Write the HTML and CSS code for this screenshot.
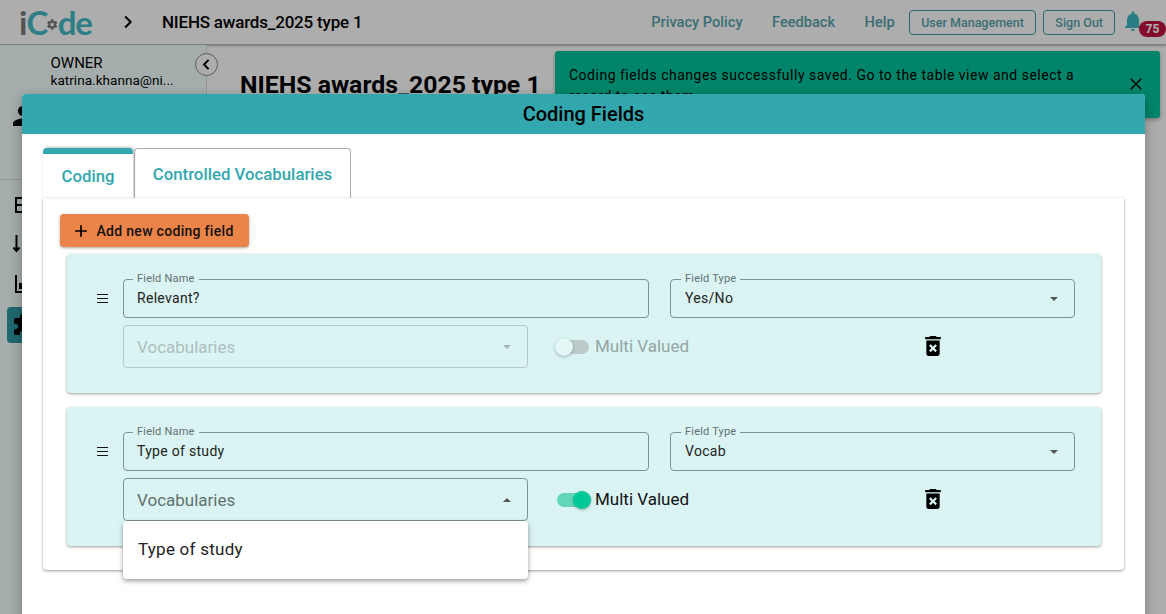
FILE: index.html
```html
<!DOCTYPE html>
<html lang="en">
<head>
    <meta charset="UTF-8">
    <title>iCode — Coding Fields</title>
    <link rel="stylesheet" href="styles.css">
</head>
<body>
    <header class="topbar">
        <div class="logo">
            <span class="logo-i">i</span>C<svg class="logo-gear" viewBox="0 0 24 24"><path d="M19.4 13c.04-.33.06-.66.06-1s-.02-.67-.06-1l2.1-1.65c.19-.15.24-.42.12-.64l-2-3.46c-.12-.22-.38-.3-.61-.22l-2.49 1c-.52-.4-1.08-.73-1.69-.98l-.38-2.65C14.4 2.18 14.2 2 13.96 2h-4c-.25 0-.46.18-.49.42l-.38 2.65c-.61.25-1.17.59-1.69.98l-2.49-1c-.23-.09-.49 0-.61.22l-2 3.46c-.13.22-.07.49.12.64L4.52 11c-.04.33-.07.67-.07 1s.03.67.07 1l-2.1 1.65c-.19.15-.25.42-.12.64l2 3.46c.12.22.38.3.61.22l2.49-1c.52.4 1.08.73 1.69.98l.38 2.65c.03.24.24.42.49.42h4c.24 0 .45-.18.49-.42l.38-2.65c.61-.25 1.17-.59 1.69-.98l2.49 1c.23.09.49 0 .61-.22l2-3.46c.12-.22.07-.49-.12-.64L19.4 13zM12 15.5c-1.93 0-3.5-1.57-3.5-3.5s1.57-3.5 3.5-3.5 3.5 1.57 3.5 3.5-1.57 3.5-3.5 3.5z"/></svg>de
        </div>
        <svg class="crumb-arrow" viewBox="0 0 24 24"><path d="M8.6 5.4 15.2 12l-6.600 6.600" fill="none" stroke="#000" stroke-width="2.400"/></svg>
        <div class="crumb-title">NIEHS awards_2025 type 1</div>
        <nav class="top-links">
            <a href="#">Privacy Policy</a>
            <a href="#">Feedback</a>
            <a href="#">Help</a>
        </nav>
        <button class="top-btn user-btn">User Management</button>
        <button class="top-btn">Sign Out</button>
        <div class="bell">
            <svg viewBox="0 0 24 24"><path d="M12 22c1.100 0 2-.9 2-2h-4c0 1.100.89 2 2 2zm6-6v-5c0-3.070-1.640-5.640-4.500-6.320V4c0-.83-.67-1.500-1.500-1.500s-1.500.67-1.500 1.500v.68C7.630 5.360 6 7.920 6 11v5l-2 2v1h16v-1l-2-2z"/></svg>
            <span class="badge">75</span>
        </div>
    </header>

    <div class="page">
        <aside class="sidebar">
            <div class="owner">
                <div>OWNER</div>
                <div>katrina.khanna@ni...</div>
            </div>
            <svg class="person" viewBox="0 0 24 24"><path d="M12 12c2.210 0 4-1.790 4-4s-1.790-4-4-4-4 1.790-4 4 1.790 4 4 4zm0 2c-2.670 0-8 1.340-8 4v2h16v-2c0-2.660-5.330-4-8-4z"/></svg>
            <ul class="side-menu">
                <li><svg viewBox="0 0 24 24"><path d="M3 4h18v16H3zm2 2v5h14V6zm0 7v5h14v-5z"/></svg></li>
                <li><svg viewBox="0 0 24 24"><path d="M4.500 2v16M1.500 14.500l3 3.500 3-3.500" fill="none" stroke="#000" stroke-width="2"/></svg></li>
                <li><svg viewBox="0 0 24 24"><path d="M3 2h2v16h16v2H3zM7 10h3v6H7zm5-4h3v10h-3z"/></svg></li>
                <li class="active"><svg viewBox="0 0 24 24"><path d="M20.500 11H19V7c0-1.100-.9-2-2-2h-4V3.500C13 2.120 11.880 1 10.500 1S8 2.120 8 3.500V5H4c-1.100 0-1.990.9-1.990 2v3.800H3.500c1.490 0 2.700 1.210 2.700 2.700s-1.210 2.700-2.700 2.700H2V20c0 1.100.9 2 2 2h3.800v-1.500c0-1.490 1.210-2.700 2.700-2.700 1.490 0 2.700 1.210 2.700 2.700V22H17c1.100 0 2-.9 2-2v-4h1.500c1.380 0 2.500-1.120 2.500-2.500S21.880 11 20.500 11z"/></svg></li>
            </ul>
            <button class="collapse-btn"><svg viewBox="0 0 24 24"><path d="M15 5.500 8.500 12l6.500 6.500" fill="none" stroke="#000" stroke-width="2.800"/></svg></button>
        </aside>
        <main class="main">
            <h1>NIEHS awards_2025 type 1</h1>
        </main>
    </div>

    <div class="toast">
        <p>Coding fields changes successfully saved. Go to the table view and select a record to see them</p>
        <svg class="toast-close" viewBox="0 0 24 24"><path d="M5 5l14 14M19 5 5 19" fill="none" stroke="#000" stroke-width="2"/></svg>
    </div>

    <div class="overlay"></div>

    <section class="modal">
        <h2 class="modal-title">Coding Fields</h2>
        <div class="modal-body">
            <div class="tabs">
                <div class="tab tab-active">Coding</div>
                <div class="tab">Controlled Vocabularies</div>
            </div>
            <div class="panel">
                <button class="add-btn">
                    <svg viewBox="0 0 24 24"><path d="M19 13h-6v6h-2v-6H5v-2h6V5h2v6h6v2z"/></svg>
                    Add new coding field
                </button>

                <div class="card">
                    <div class="row-top">
                        <svg class="handle" viewBox="0 0 12 12"><path d="M0 1.500h11M0 5.500h11M0 9.500h11" stroke="#111" stroke-width="1.100"/></svg>
                        <div class="field name-field">
                            <span class="field-label">Field Name</span>
                            Relevant?
                        </div>
                        <div class="field type-field">
                            <span class="field-label">Field Type</span>
                            Yes/No
                            <span class="caret"></span>
                        </div>
                    </div>
                    <div class="row-bottom">
                        <div class="field select-field disabled">
                            Vocabularies
                            <span class="caret"></span>
                        </div>
                        <div class="switch-wrap disabled">
                            <span class="switch"><span class="thumb"></span></span>
                            <span class="switch-label">Multi Valued</span>
                        </div>
                        <svg class="trash" viewBox="5 3 14 18"><path d="M6 19c0 1.100.9 2 2 2h8c1.100 0 2-.9 2-2V7H6v12zm2.460-7.120l1.410-1.410L12 12.590l2.120-2.120 1.410 1.410L13.410 14l2.120 2.120-1.410 1.410L12 15.410l-2.120 2.120-1.410-1.410L10.590 14l-2.130-2.120zM15.500 4l-1-1h-5l-1 1H5v2h14V4z"/></svg>
                    </div>
                </div>

                <div class="card">
                    <div class="row-top">
                        <svg class="handle" viewBox="0 0 12 12"><path d="M0 1.500h11M0 5.500h11M0 9.500h11" stroke="#111" stroke-width="1.100"/></svg>
                        <div class="field name-field">
                            <span class="field-label">Field Name</span>
                            Type of study
                        </div>
                        <div class="field type-field">
                            <span class="field-label">Field Type</span>
                            Vocab
                            <span class="caret"></span>
                        </div>
                    </div>
                    <div class="row-bottom">
                        <div class="field select-field open">
                            Vocabularies
                            <span class="caret caret-up"></span>
                            <div class="dropdown">Type of study</div>
                        </div>
                        <div class="switch-wrap on">
                            <span class="switch"><span class="thumb"></span></span>
                            <span class="switch-label">Multi Valued</span>
                        </div>
                        <svg class="trash" viewBox="5 3 14 18"><path d="M6 19c0 1.100.9 2 2 2h8c1.100 0 2-.9 2-2V7H6v12zm2.460-7.120l1.410-1.410L12 12.590l2.120-2.120 1.410 1.410L13.410 14l2.120 2.120-1.410 1.410L12 15.410l-2.120 2.120-1.410-1.410L10.590 14l-2.130-2.120zM15.500 4l-1-1h-5l-1 1H5v2h14V4z"/></svg>
                    </div>
                </div>
            </div>
        </div>
    </section>
</body>
</html>
```

FILE: styles.css
```css
* {
    box-sizing: border-box;
}
html, body {
    height: 614px;
}
body {
    margin: 0;
    overflow: hidden;
    position: relative;
    font-family: Roboto, "Liberation Sans", sans-serif;
    background-color: #fff;
    color: #000;
}

/* top bar */
.topbar {
    display: flex;
    align-items: center;
    height: 45px;
    padding-left: 19px;
    border-bottom: 1px solid #bbb;
    background-color: #fff;
    box-shadow: 0 1px 2px rgba(0, 0, 0, .3);
}
.logo {
    display: flex;
    align-items: center;
    width: 73px;
    font-family: Lato, sans-serif;
    font-size: 33px;
    font-weight: 700;
    line-height: 44px;
    letter-spacing: -1px;
    color: #45bbc5;
}
.logo-i {
    color: #7d7d7d;
}
.logo-gear {
    width: 17px;
    height: 17px;
    margin: 5px -1px 0 -1px;
    fill: #7d7d7d;
}
.crumb-arrow {
    width: 20px;
    height: 20px;
    margin-left: 26px;
}
.crumb-title {
    margin-left: 24px;
    font-size: 17px;
    font-weight: 500;
    letter-spacing: -.2px;
}
.top-links {
    display: flex;
    gap: 29.500px;
    margin-left: auto;
}
.top-links a {
    font-size: 14.600px;
    font-weight: 500;
    color: #57a3aa;
    text-decoration: none;
}
.top-btn {
    height: 25px;
    margin-left: 7px;
    padding: 0 11px;
    border: 1px solid #3b9aa3;
    border-radius: 4px;
    background: none;
    font-family: inherit;
    font-size: 12.500px;
    font-weight: 500;
    color: #57a3aa;
}
.user-btn {
    margin-left: 14px;
    padding: 0 11.500px;
}
.bell {
    position: relative;
    width: 45px;
    height: 45px;
    margin-left: 6px;
}
.bell svg {
    position: absolute;
    left: 0;
    top: 9px;
    width: 24px;
    height: 24px;
    fill: #3eb8c2;
}
.badge {
    position: absolute;
    left: 18px;
    top: 21px;
    width: 27px;
    height: 16px;
    border-radius: 8px;
    background-color: #c21240;
    color: #fff;
    font-size: 12px;
    font-weight: 700;
    line-height: 17px;
    text-align: center;
}

/* page behind the modal */
.page {
    display: flex;
    height: 569px;
}
.sidebar {
    position: relative;
    width: 207px;
    border-right: 1px solid #ddd;
    background-color: #f2fffd;
}
.owner {
    padding: 10px 0 0 50.500px;
    height: 49px;
    font-size: 13.600px;
    line-height: 17px;
}
.owner div:first-child {
    font-size: 15px;
}
.person {
    display: block;
    width: 30px;
    height: 30px;
    margin: 7px 0 0 8px;
}
.side-menu {
    list-style-type: none;
    margin: 48px 0 0;
    padding: 7px 0 0 7px;
    border-top: 1px solid #ddd;
}
.side-menu li {
    display: flex;
    align-items: center;
    height: 36px;
    margin-bottom: 4px;
    padding-left: 5px;
    border-radius: 4px;
}
.side-menu svg {
    width: 24px;
    height: 24px;
}
.side-menu .active {
    background-color: #2f9aa3;
}
.collapse-btn {
    position: absolute;
    left: 195px;
    top: 8px;
    width: 23px;
    height: 23px;
    padding: 2px;
    border: 1px solid #888;
    border-radius: 50%;
    background-color: #fff;
}
.collapse-btn svg {
    display: block;
    width: 17px;
    height: 17px;
}
.main {
    flex: 1;
    padding-left: 33px;
}
.main h1 {
    margin: 25px 0 0;
    font-size: 24.800px;
    font-weight: 700;
}
.toast {
    position: absolute;
    left: 555px;
    top: 51px;
    width: 605px;
    height: 67px;
    padding: 14px 50px 0 14px;
    border-radius: 3px;
    background-color: #00c49c;
    box-shadow: 0 2px 4px rgba(0, 0, 0, .3);
}
.toast p {
    margin: 0;
    font-size: 14px;
    line-height: 21px;
    letter-spacing: .5px;
}
.toast-close {
    position: absolute;
    right: 15px;
    top: 24px;
    width: 18px;
    height: 18px;
}
.overlay {
    position: absolute;
    inset: 0;
    background-color: rgba(0, 0, 0, .32);
}

/* modal */
.modal {
    position: absolute;
    left: 22px;
    top: 94px;
    width: 1123px;
    height: 530px;
    border-radius: 4px 4px 0 0;
    background-color: #fff;
    box-shadow: 0 4px 12px rgba(0, 0, 0, .3);
}
.modal-title {
    height: 40px;
    margin: 0;
    border-radius: 4px 4px 0 0;
    background-color: #33a7ae;
    font-size: 20px;
    font-weight: 500;
    line-height: 41px;
    text-align: center;
}
.modal-body {
    padding: 14px 21px 0;
}
.tabs {
    display: flex;
    gap: 1px;
    height: 50px;
}
.tab {
    width: 217px;
    padding-top: 15px;
    border: 1px solid #aaa;
    border-bottom: none;
    border-radius: 4px 4px 0 0;
    font-size: 16.800px;
    font-weight: 500;
    color: #33a7ae;
    text-align: center;
}
.tab-active {
    width: 90px;
    padding-top: 12px;
    border: none;
    border-top: 6px solid #33a7ae;
    box-shadow: 1px -1px 3px rgba(0, 0, 0, .25);
}
.panel {
    height: 372px;
    padding: 16px 23px 0 24px;
    border-radius: 0 0 4px 4px;
    background-color: #fff;
    box-shadow: 0 1px 3px rgba(0, 0, 0, .4);
}
.add-btn {
    display: flex;
    align-items: center;
    gap: 6px;
    width: 189px;
    height: 33px;
    margin-left: -7px;
    padding: 0 0 0 10.500px;
    border: none;
    border-radius: 4px;
    background-color: #ea8449;
    box-shadow: 0 1px 3px rgba(0, 0, 0, .35);
    font-family: inherit;
    font-size: 14px;
    font-weight: 500;
    letter-spacing: .3px;
    color: #111;
}
.add-btn svg {
    width: 20px;
    height: 20px;
}
.card {
    height: 139px;
    margin-top: 7px;
    margin-bottom: 14px;
    padding: 25px 26px 0 30px;
    border-radius: 4px;
    background-color: #daf4f3;
    box-shadow: 0 1px 3px rgba(0, 0, 0, .4);
}
.row-top {
    display: flex;
    align-items: center;
}
.handle {
    width: 12px;
    height: 12px;
    margin-right: 14px;
}
.field {
    position: relative;
    display: flex;
    align-items: center;
    height: 39px;
    padding: 0 0 2px 13px;
    border: 1px solid #7f9291;
    border-radius: 4px;
    font-size: 14px;
    letter-spacing: .3px;
    color: #222;
}
.name-field {
    width: 526px;
}
.type-field {
    width: 405px;
    margin-left: 21px;
    padding-left: 14px;
}
.field-label {
    position: absolute;
    left: 9px;
    top: -7px;
    padding: 0 4px;
    background-color: #daf4f3;
    font-size: 11px;
    line-height: 12px;
    letter-spacing: .2px;
    color: #5f7170;
}
.type-field .field-label {
    left: 10px;
}
.caret {
    position: absolute;
    right: 16px;
    top: 50%;
    margin-top: -2px;
    border-left: 4.500px solid transparent;
    border-right: 4.500px solid transparent;
    border-top: 4.500px solid #555;
}
.caret-up {
    border-top: none;
    border-bottom: 4.500px solid #555;
}
.row-bottom {
    display: grid;
    grid-template-columns: 405px 397px 16px;
    align-items: center;
    margin-top: 7px;
    margin-left: 26px;
}
.select-field {
    height: 43px;
    padding: 1px 0 0 13px;
    font-size: 17px;
    letter-spacing: 0;
    color: #5f7170;
}
.select-field.disabled {
    border-color: #b5c9c8;
    color: #adbfbe;
}
.select-field.disabled .caret {
    border-top-color: #a5b5b4;
}
.dropdown {
    position: absolute;
    left: -1px;
    top: 42px;
    z-index: 2;
    width: 405px;
    height: 58px;
    padding-left: 15px;
    border-radius: 4px;
    background-color: #fff;
    box-shadow: 0 2px 5px rgba(0, 0, 0, .4);
    font-size: 17px;
    line-height: 57px;
    letter-spacing: .25px;
    color: #222;
}
.switch-wrap {
    display: flex;
    align-items: center;
    margin-left: 29px;
    font-size: 17px;
    color: #111;
}
.switch-label {
    margin-top: -2px;
}
.switch-wrap.disabled {
    color: #93a5a4;
}
.switch {
    position: relative;
    width: 32px;
    height: 14px;
    margin-right: 6px;
    border-radius: 7px;
    background-color: #bccbca;
}
.thumb {
    position: absolute;
    left: -2px;
    top: -2px;
    width: 18px;
    height: 18px;
    border-radius: 50%;
    background-color: #e4f6f5;
    box-shadow: 0 1px 3px rgba(0, 0, 0, .3);
}
.on .switch {
    background-color: #62d6b9;
}
.on .thumb {
    left: 16px;
    background-color: #00c897;
}
.trash {
    width: 16px;
    height: 20px;
    margin-top: -2px;
}
```
